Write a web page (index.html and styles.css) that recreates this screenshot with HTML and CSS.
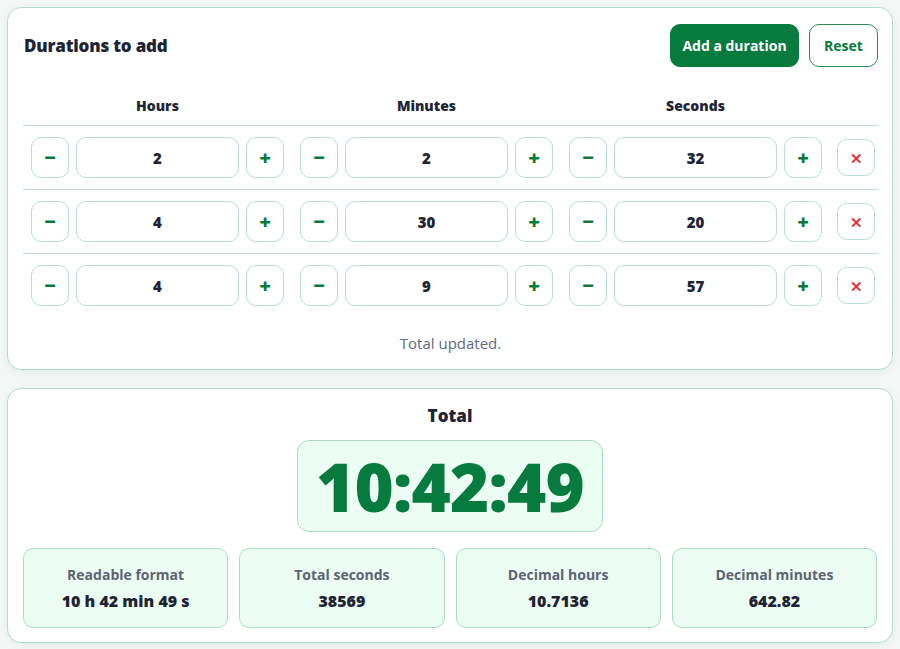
FILE: index.html
```html
<!DOCTYPE html>
<html lang="en">
<head>
<meta charset="utf-8">
<title>Duration calculator</title>
<link rel="stylesheet" href="styles.css">
</head>
<body>
<main class="page">
  <section class="card entry">
    <div class="topbar">
      <h2 class="title">Durations to add</h2>
      <div class="actions">
        <button class="btn primary">Add a duration</button>
        <button class="btn outline">Reset</button>
      </div>
    </div>
    <div class="grid head">
      <div class="hcell">Hours</div>
      <div class="hcell">Minutes</div>
      <div class="hcell">Seconds</div>
      <div class="hcell"></div>
    </div>
    <div class="grid row">
      <div class="cell"><button class="step">&minus;</button><div class="num">2</div><button class="step">+</button></div>
      <div class="cell"><button class="step">&minus;</button><div class="num">2</div><button class="step">+</button></div>
      <div class="cell"><button class="step">&minus;</button><div class="num">32</div><button class="step">+</button></div>
      <div class="dcell"><button class="del">&#x2715;</button></div>
    </div>
    <div class="grid row">
      <div class="cell"><button class="step">&minus;</button><div class="num">4</div><button class="step">+</button></div>
      <div class="cell"><button class="step">&minus;</button><div class="num">30</div><button class="step">+</button></div>
      <div class="cell"><button class="step">&minus;</button><div class="num">20</div><button class="step">+</button></div>
      <div class="dcell"><button class="del">&#x2715;</button></div>
    </div>
    <div class="grid row last">
      <div class="cell"><button class="step">&minus;</button><div class="num">4</div><button class="step">+</button></div>
      <div class="cell"><button class="step">&minus;</button><div class="num">9</div><button class="step">+</button></div>
      <div class="cell"><button class="step">&minus;</button><div class="num">57</div><button class="step">+</button></div>
      <div class="dcell"><button class="del">&#x2715;</button></div>
    </div>
    <p class="status">Total updated.</p>
  </section>
  <section class="card result">
    <h2 class="rtitle">Total</h2>
    <div class="bigwrap"><div class="big">10:42:49</div></div>
    <div class="stats">
      <div class="stat"><div class="label">Readable format</div><div class="value">10 h 42 min 49 s</div></div>
      <div class="stat"><div class="label">Total seconds</div><div class="value">38569</div></div>
      <div class="stat"><div class="label">Decimal hours</div><div class="value">10.7136</div></div>
      <div class="stat"><div class="label">Decimal minutes</div><div class="value">642.82</div></div>
    </div>
  </section>
</main>
</body>
</html>
```
FILE: styles.css
```css
* { box-sizing: border-box; }
html, body { margin: 0; padding: 0; }
body {
  background: #f3f7f5;
  font-family: "Open Sans", "Noto Sans", sans-serif;
  color: #1e2433;
}
.page {
  padding: 7px;
  display: flex;
  flex-direction: column;
  gap: 18px;
}
.card {
  background: #fff;
  border: 1px solid #b2dccb;
  border-radius: 14px;
  box-shadow: 0 2px 8px rgba(20, 80, 50, 0.06);
}
.entry { padding: 16px 14px 18px 15px; height: 363px; }
.topbar {
  display: flex;
  align-items: center;
  justify-content: space-between;
  padding-left: 1px;
}
.title { margin: 0; font-size: 17px; font-weight: 800; letter-spacing: -0.2px; }
.actions { display: flex; gap: 10px; }
.btn {
  font-family: inherit;
  font-size: 14px;
  font-weight: 700;
  height: 43px;
  border-radius: 10px;
  padding: 0;
  white-space: nowrap;
  cursor: pointer;
}
.primary { background: #077a3d; color: #fff; border: 1px solid #077a3d; width: 129px; }
.outline { background: #fff; color: #077a3d; border: 1px solid #2e8a58; width: 69px; }
.grid {
  display: grid;
  grid-template-columns: 1fr 1fr 1fr 48px;
}
.head {
  margin-top: 25px;
  height: 34px;
  padding-bottom: 6px;
  align-items: center;
  border-bottom: 1px solid #bcdccd;
}
.hcell { text-align: center; font-size: 14px; font-weight: 800; }
.row {
  height: 64px;
  align-items: center;
  border-bottom: 1px solid #bcdccd;
}
.row.last { border-bottom: none; height: 63px; }
.cell {
  display: flex;
  gap: 7px;
  padding: 0 8px;
  align-items: center;
}
.step, .num, .del {
  height: 41px;
  border: 1px solid #b8dfcf;
  border-radius: 10px;
  background: #fff;
  font-family: inherit;
}
.step {
  width: 38px;
  flex: none;
  color: #077a3d;
  font-size: 20px;
  font-weight: 800;
  padding: 0;
  line-height: 1;
}
.num {
  flex: 1;
  display: flex;
  align-items: center;
  justify-content: center;
  font-size: 15px;
  font-weight: 800;
}
.dcell { display: flex; justify-content: flex-end; padding-right: 3px; }
.del {
  width: 38px;
  height: 37px;
  color: #e03a3f;
  font-size: 15px;
  font-weight: 700;
  padding: 0;
}
.status {
  margin: 16px 0 0;
  text-align: center;
  font-size: 15px;
  color: #5f6b7e;
}
.result {
  padding: 16px 15px 14px;
  display: flex;
  flex-direction: column;
  align-items: center;
}
.rtitle { margin: 0; font-size: 17px; font-weight: 800; line-height: 22px; }
.bigwrap {
  margin-top: 13px;
  width: 306px;
  height: 92px;
  background: #ecfdf3;
  border: 1px solid #a9dcc2;
  border-radius: 12px;
  display: flex;
  align-items: center;
  justify-content: center;
}
.big {
  font-size: 67px;
  font-weight: 800;
  color: #077a3d;
  letter-spacing: -0.8px;
  line-height: 1;
}
.stats {
  margin-top: 16px;
  width: 100%;
  display: grid;
  grid-template-columns: repeat(4, 1fr);
  gap: 11px;
}
.stat {
  height: 80px;
  background: #ecfdf3;
  border: 1px solid #a9dcc2;
  border-radius: 10px;
  display: flex;
  flex-direction: column;
  align-items: center;
  justify-content: center;
  gap: 6px;
}
.label { font-size: 14px; font-weight: 700; color: #5b6474; }
.value { font-size: 16px; font-weight: 800; color: #1e2433; }
```
